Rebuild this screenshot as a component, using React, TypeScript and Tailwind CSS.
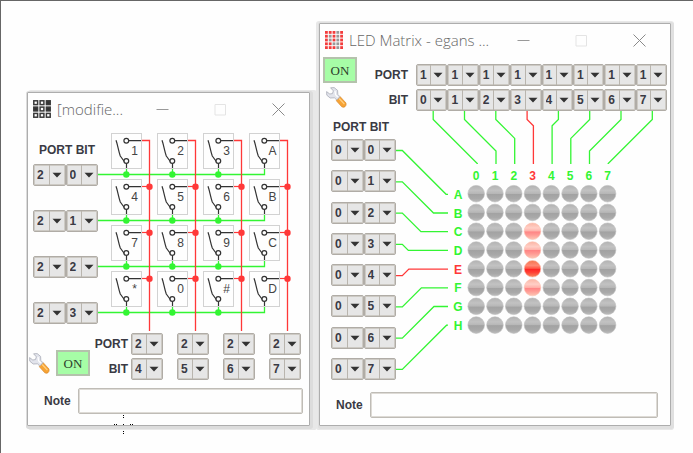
import React from "react";

const GREEN = "#33f533";
const RED = "#ff3838";
const DIGITS = ["0", "1", "2", "3", "4", "5", "6", "7"];

function PinSelect({ value, label }: { value: string; label: string }) {
  return (
    <span className="grid h-[22px] w-full">
      <select
        aria-label={label}
        defaultValue={value}
        className="col-start-1 row-start-1 h-[22px] w-full appearance-none rounded-xs border border-[#b0aca6] bg-[#e6e6e6] pl-[3px] text-xs font-bold text-[#3a3a44] shadow-[inset_0_0_0_1px_#cdcac4] outline-none"
      >
        {DIGITS.map((d) => (
          <option key={d}>{d}</option>
        ))}
      </select>
      <svg className="pointer-events-none col-start-1 row-start-1 justify-self-end" width="17" height="22" aria-hidden="true">
        <path d="M0.5 1V21" stroke="#b9b5ae" />
        <path d="M3.5 8.7H12.5L8 13.6Z" fill="#333" />
      </svg>
    </span>
  );
}

function PinPair({ port, bit, name }: { port: string; bit: string; name: string }) {
  return (
    <div className="grid w-[65px] grid-cols-2">
      <PinSelect value={port} label={`${name} port`} />
      <PinSelect value={bit} label={`${name} bit`} />
    </div>
  );
}

function Wrench() {
  return (
    <button aria-label="Settings" className="h-[21px] w-[21px] shrink-0">
      <svg viewBox="0 0 21 21" width="21" height="21">
        <path
          d="M11.2 10.8L14.2 9.7L20 16Q20.6 18.4 19 19.7Q17.2 20.8 15.8 19.8L10.4 13.8Z"
          fill="#f7a334"
          stroke="#d98a2c"
          strokeWidth=".7"
        />
        <path d="M13.2 11.5L18.4 17.2" stroke="#ffd083" strokeWidth="1.2" />
        <path
          d="M4.6 0.8L8.2 0.6L11.6 3.4L11.8 7.4L14 9.8L10.8 13L8.4 10.8L4.2 11L0.8 8.2L0.6 4.6L3.8 7L6.4 6.6L7.4 3.9Z"
          fill="#e2e4ec"
          stroke="#a9acb8"
          strokeWidth=".8"
          strokeLinejoin="round"
        />
        <path d="M9 4L9.6 7.8L11.8 10.2" stroke="#fff" strokeWidth="1.2" fill="none" />
      </svg>
    </button>
  );
}

function OnButton() {
  return (
    <button className="h-[26px] w-[34px] shrink-0 border-2 border-[#b4c2ac] bg-[#a6fda6] font-['Liberation_Serif',serif] text-[13px] leading-none text-[#2c402c]">
      ON
    </button>
  );
}

function WindowButton({ label, d, color }: { label: string; d: string; color: string }) {
  return (
    <button aria-label={label} className="flex h-8 w-[58px] shrink-0 items-center justify-center">
      <svg width="13" height="13" viewBox="0 0 13 13" fill="none" stroke={color}>
        <path d={d} />
      </svg>
    </button>
  );
}

function ToolWindow({
  title,
  icon,
  className,
  children,
}: {
  title: string;
  icon: React.ReactNode;
  className: string;
  children: React.ReactNode;
}) {
  return (
    <section className={`shrink-0 rounded-[1px] border border-[#adadad] bg-[#fefefe] ${className}`}>
      <header className="flex h-8 items-center pr-0.5 pl-[5px]">
        {icon}
        <h1 className="ml-1.5 min-w-0 flex-1 whitespace-nowrap font-['Open_Sans','Noto_Sans',sans-serif] text-[15px] leading-8 font-light text-[#666]">
          {title}
        </h1>
        <WindowButton label="Minimize" d="M0.5 6.5H12.5" color="#999" />
        <WindowButton label="Maximize" d="M1 1.5H11.5V12H1Z" color="#e4e4e4" />
        <WindowButton label="Close" d="M0.5 0.5L12.5 12.5M12.5 0.5L0.5 12.5" color="#8a8a8a" />
      </header>
      {children}
    </section>
  );
}

function Note({ id, className }: { id: string; className: string }) {
  return (
    <div className={`flex items-center gap-[7px] pl-4 ${className}`}>
      <label htmlFor={id} className="text-xs font-bold">
        Note
      </label>
      <input
        id={id}
        type="text"
        className="h-[26px] min-w-0 flex-1 rounded-xs border border-[#bfbcb6] bg-[#fefefe] px-1 text-xs shadow-[inset_0_0_0_1px_#dedbd6] outline-none"
      />
    </div>
  );
}

const KEYS = ["1", "2", "3", "A", "4", "5", "6", "B", "7", "8", "9", "C", "*", "0", "#", "D"];

function KeypadIcon() {
  const filled = [2, 3, 5];
  return (
    <svg width="18" height="18" viewBox="0 0 18 18" aria-hidden="true" className="shrink-0">
      {Array.from({ length: 9 }, (_, i) => (
        <rect
          key={i}
          x={0.8 + (i % 3) * 6.3}
          y={0.8 + Math.floor(i / 3) * 6.3}
          width="3.8"
          height="3.8"
          fill={filled.includes(i) ? "#333" : "#fff"}
          stroke="#3a3a3a"
          strokeWidth="1.5"
        />
      ))}
    </svg>
  );
}

function MatrixIcon() {
  const gray = [3, 6, 8, 11, 13, 17, 18, 23];
  return (
    <svg width="18" height="18" viewBox="0 0 18 18" aria-hidden="true" className="shrink-0">
      {Array.from({ length: 25 }, (_, i) => (
        <rect
          key={i}
          x={(i % 5) * 3.8}
          y={Math.floor(i / 5) * 3.8}
          width="2.8"
          height="2.8"
          fill={gray.includes(i) ? "#999" : "#f23c3c"}
        />
      ))}
    </svg>
  );
}

function Keypad() {
  const four = [0, 1, 2, 3];
  return (
    <div className="grid">
      <svg width="211" height="207" viewBox="0 0 211 207" fill="none" className="col-start-1 row-start-1" aria-hidden="true">
        {four.map((r) => (
          <path key={r} d={`M0 ${49.5 + r * 46}H166.5V${44 + r * 46}`} stroke={GREEN} strokeWidth="1.3" />
        ))}
        {four.map((c) => (
          <path key={c} d={`M${43 + c * 46} 15.5H${51.5 + c * 46}V206`} stroke={RED} strokeWidth="1.3" />
        ))}
        {four.map((r) =>
          four.map((c) => (
            <g key={`${r}-${c}`}>
              {c < 3 && (
                <>
                  <path d={`M${28.5 + c * 46} ${44 + r * 46}v5`} stroke={GREEN} strokeWidth="1.3" />
                  <circle cx={28.3 + c * 46} cy={49.5 + r * 46} r="3.2" fill={GREEN} />
                </>
              )}
              {r > 0 && (
                <>
                  <path d={`M${43 + c * 46} ${15.5 + r * 46}h9`} stroke={RED} strokeWidth="1.2" />
                  <circle cx={51.5 + c * 46} cy={15.8 + r * 46} r="3.2" fill={RED} />
                </>
              )}
            </g>
          )),
        )}
      </svg>
      <div className="z-10 col-start-1 row-start-1 grid grid-cols-[repeat(4,31px)] content-start gap-x-[15px] gap-y-[10px] self-start pt-2 pl-[13px]">
        {KEYS.map((k) => (
          <button key={k} aria-label={`Key ${k}`} className="h-9 w-[31px] border border-[#d2d2d2] bg-[#fefefe]">
            <svg width="29" height="34" viewBox="0 0 29 34" fill="none" stroke="#333" strokeWidth="1.2">
              <path d="M4 6.2C5.5 10 6.5 17 8.3 22L12.3 27.5" />
              <circle cx="14.3" cy="6.7" r="2.4" />
              <circle cx="14.3" cy="27" r="2.4" />
              <path d="M17 6.7H29M14.5 29.5V34" />
              <text x="22.5" y="21.3" textAnchor="middle" fontSize="12" fill="#444" stroke="none">
                {k}
              </text>
            </svg>
          </button>
        ))}
      </div>
    </div>
  );
}

function KeypadWindow() {
  return (
    <ToolWindow
      title="[modifie..."
      icon={<KeypadIcon />}
      className="w-[283px] shadow-[1px_1px_0_2px_#dcdcdc,4px_1px_0_3px_#e8e8e8]"
    >
      <div className="flex">
        <div className="w-[70px] shrink-0 pt-[17px] pl-[5px]">
          <div className="pl-1.5 text-xs leading-4 font-bold whitespace-nowrap">PORT BIT</div>
          <div className="mt-1.5 flex flex-col gap-6">
            {["0", "1", "2", "3"].map((b) => (
              <PinPair key={b} port="2" bit={b} name={`Row ${b}`} />
            ))}
          </div>
        </div>
        <Keypad />
      </div>
      <div className="flex items-start pt-px pl-px">
        <div className="flex items-center gap-1.5 pt-[17px]">
          <Wrench />
          <OnButton />
        </div>
        <div className="grid grid-cols-[38px_auto] items-center gap-[3px] text-right text-xs font-bold">
          <span>PORT</span>
          <div className="grid grid-cols-[repeat(4,32px)] gap-[14px]">
            {["4", "5", "6", "7"].map((b) => (
              <PinSelect key={b} value="2" label={`Column port ${b}`} />
            ))}
          </div>
          <span>BIT</span>
          <div className="grid grid-cols-[repeat(4,32px)] gap-[14px]">
            {["4", "5", "6", "7"].map((b) => (
              <PinSelect key={b} value={b} label={`Column bit ${b}`} />
            ))}
          </div>
        </div>
      </div>
      <Note id="keypad-note" className="mt-2 pr-1.5 pb-[11px]" />
    </ToolWindow>
  );
}

const LIT: Record<string, string> = { C: "url(#dim)", D: "url(#dim)", E: "url(#bright)", F: "url(#dim)" };

function LedMatrix() {
  const cx = (i: number) => 80.2 + i * 18.77;
  const cy = (i: number) => 82.7 + i * 18.77;
  return (
    <svg width="264" height="269" viewBox="0 0 264 269" fill="none" fontSize="12" fontWeight="700" textAnchor="middle">
      <defs>
        <linearGradient id="off" x1="0" y1="0" x2="0" y2="1">
          <stop offset="0" stopColor="#b2b2b2" />
          <stop offset=".3" stopColor="#c2c2c2" />
          <stop offset=".5" stopColor="#b6b6b6" />
          <stop offset=".53" stopColor="#a2a2a2" />
          <stop offset=".8" stopColor="#a9a9a9" />
          <stop offset="1" stopColor="#bcbcbc" />
        </linearGradient>
        <linearGradient id="dim" x1="0" y1="0" x2="0" y2="1">
          <stop offset="0" stopColor="#fbb5a4" />
          <stop offset=".3" stopColor="#ffcfc6" />
          <stop offset=".5" stopColor="#ffb0a8" />
          <stop offset=".53" stopColor="#ff8484" />
          <stop offset=".72" stopColor="#ff9a94" />
          <stop offset="1" stopColor="#fdc6b4" />
        </linearGradient>
        <linearGradient id="bright" x1="0" y1="0" x2="0" y2="1">
          <stop offset="0" stopColor="#f4744e" />
          <stop offset=".3" stopColor="#ff8a74" />
          <stop offset=".48" stopColor="#ff5544" />
          <stop offset=".52" stopColor="#ff2222" />
          <stop offset=".72" stopColor="#ff4034" />
          <stop offset="1" stopColor="#f68a5e" />
        </linearGradient>
      </defs>
      {DIGITS.map((d, i) => {
        const x = 37.2 + i * 31.3;
        const tx = 81.3 + i * 18.7;
        const color = i === 3 ? RED : GREEN;
        return (
          <g key={d}>
            <path d={`M${x} 0V8.5L${tx} ${8.5 + Math.abs(tx - x)}V53`} stroke={color} strokeWidth="1.3" />
            <text x={cx(i)} y="69" fill={color}>
              {d}
            </text>
          </g>
        );
      })}
      {"ABCDEFGH".split("").map((letter, i) => {
        const y = 39.5 + i * 31.28;
        const ty = 83.3 + i * 18.7;
        const color = letter === "E" ? RED : GREEN;
        return (
          <g key={letter}>
            <path d={`M0 ${y}H6.3L${6.3 + Math.abs(ty - y)} ${ty}H52`} stroke={color} strokeWidth="1.3" />
            <text x="62" y={ty + 4.5} fill={color}>
              {letter}
            </text>
            {DIGITS.map((d, c) => (
              <circle
                key={d}
                cx={cx(c)}
                cy={cy(i)}
                r="8.3"
                fill={(c === 3 && LIT[letter]) || "url(#off)"}
                stroke={c === 3 && LIT[letter] ? "#fbc0ae" : "#bdbdbd"}
                strokeWidth=".6"
              />
            ))}
          </g>
        );
      })}
    </svg>
  );
}

function MatrixWindow() {
  return (
    <ToolWindow
      title="LED Matrix - egans ..."
      icon={<MatrixIcon />}
      className="w-[352px] shadow-[1px_1px_0_2px_#e0e0e0,0_1px_0_3px_#e8e8e8]"
    >
      <div className="flex items-start justify-between px-[3px]">
        <div className="grid gap-1 pt-px">
          <OnButton />
          <div className="flex pl-[3px]">
            <Wrench />
          </div>
        </div>
        <div className="grid grid-cols-[auto_251px] items-center gap-x-2 gap-y-[3px] pt-2 text-right text-xs font-bold">
          <span>PORT</span>
          <div className="grid grid-cols-8">
            {DIGITS.map((d) => (
              <PinSelect key={d} value="1" label={`Column ${d} port`} />
            ))}
          </div>
          <span>BIT</span>
          <div className="grid grid-cols-8">
            {DIGITS.map((d) => (
              <PinSelect key={d} value={d} label={`Column ${d} bit`} />
            ))}
          </div>
        </div>
      </div>
      <div className="flex">
        <div className="flex w-[76px] shrink-0 flex-col pt-2 pl-[11px]">
          <div className="pl-0.5 text-xs leading-4 font-bold whitespace-nowrap">PORT BIT</div>
          <div className="mt-1 flex grow flex-col justify-between">
            {DIGITS.map((d) => (
              <PinPair key={d} port="0" bit={d} name={`Row ${d}`} />
            ))}
          </div>
        </div>
        <LedMatrix />
      </div>
      <Note id="matrix-note" className="mt-3 pr-3 pb-[7px]" />
    </ToolWindow>
  );
}

export default function App() {
  return (
    <main className="relative min-h-screen overflow-hidden border-t border-l border-[#666] bg-[#fefefe] font-['Liberation_Sans',Arial,sans-serif] text-[#3a3a44]">
      <div className="flex items-end gap-[9px] pt-[22px] pl-[26px]">
        <KeypadWindow />
        <MatrixWindow />
      </div>
      <svg
        className="pointer-events-none absolute top-[414px] left-[112px]"
        width="21"
        height="21"
        viewBox="0 0 21 21"
        fill="#000"
        shapeRendering="crispEdges"
        aria-hidden="true"
      >
        <path d="M10 0h1v1h-1zM10 2h1v1h-1zM10 9h1v1h-1zM10 16h1v1h-1zM10 18h1v1h-1zM1 9h1v1h-1zM3 9h1v1h-1zM17 9h1v1h-1zM19 9h1v1h-1z" />
      </svg>
    </main>
  );
}
